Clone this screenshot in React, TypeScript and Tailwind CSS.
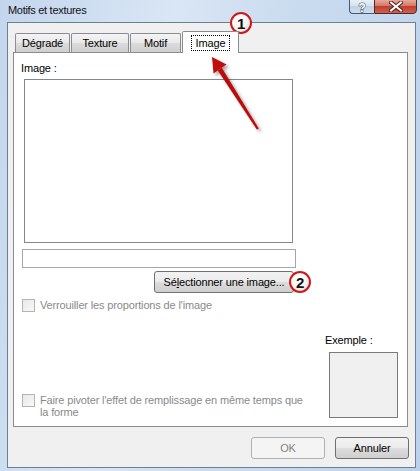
import React from "react";

function Checkbox() {
  return (
    <div className="w-[13px] h-[13px] shrink-0 border border-[#b4b4b4] bg-[linear-gradient(135deg,#e8e8e8,#f8f8f8)]" />
  );
}

function Tab({ label, w }: { label: string; w: string }) {
  return (
    <div
      className={`${w} h-[19px] mr-[1px] flex items-center justify-center border border-b-0 border-[#898c95] rounded-t-[2px] bg-[linear-gradient(#f4f4f4,#e9e9e9_50%,#dcdcdc_50%,#cfcfcf)] text-black`}
    >
      {label}
    </div>
  );
}

export default function App() {
  return (
    <div className="relative w-[420px] h-[471px] overflow-hidden bg-[linear-gradient(100deg,#c3d6ed,#d9e6f5_35%,#c9dbef_60%,#bcd2ec)] font-['Liberation_Sans',Arial,sans-serif] text-[11px] leading-[13px] tracking-[-0.15px] text-black">
      {/* title bar */}
      <div className="flex h-[22px]">
        <div className="pl-[8px] pt-[4px] text-[11px] tracking-[-0.3px] text-[#111]">Motifs et textures</div>
        <div className="ml-auto mr-[3px] flex h-[15px] -mt-px">
          <div className="w-[25px] h-full border border-[#4a5a70] border-r-0 rounded-bl-[4px] bg-[linear-gradient(#e9f0f8,#d4e0ee_50%,#c2d2e5_50%,#cfdcec)] flex items-center justify-center">
            <svg width="12" height="14" viewBox="0 0 12 14">
              <text x="6" y="12" textAnchor="middle" fontFamily="Liberation Sans, Arial, sans-serif" fontWeight="bold" fontSize="12" fill="#ffffff" stroke="#3c4a5c" strokeWidth="1" paintOrder="stroke">?</text>
            </svg>
          </div>
          <div className="w-[43px] h-full border border-[#4a2a2a] rounded-br-[4px] bg-[linear-gradient(#e8a899,#d47766_45%,#c0402f_50%,#d0604c)] flex items-center justify-center">
            <svg width="14" height="11" viewBox="0 0 14 11">
              <path d="M2 1.5 L12 9.5 M12 1.5 L2 9.5" stroke="#4a2020" strokeWidth="4" strokeLinecap="square" />
              <path d="M2 1.5 L12 9.5 M12 1.5 L2 9.5" stroke="#ffffff" strokeWidth="2" strokeLinecap="square" />
            </svg>
          </div>
        </div>
      </div>

      {/* client area */}
      <div className="ml-[7px] w-[409px] h-[446px] border border-[#6f7f92] bg-[#f0f0f0] flex flex-col">
        {/* tabs */}
        <div className="mt-[8px] ml-[7px] h-[21px] flex items-end">
          <Tab label="Dégradé" w="w-[55px]" />
          <Tab label="Texture" w="w-[58px]" />
          <Tab label="Motif" w="w-[51px]" />
          <div className="relative z-10 w-[57px] h-[22px] -mb-px border border-b-0 border-[#898c95] rounded-t-[2px] bg-white flex items-start justify-center pt-[3px]">
            <span className="border border-dotted border-black px-[4px] h-[16px] leading-[14px]">Image</span>
          </div>
        </div>

        {/* tab panel */}
        <div className="ml-[5px] w-[395px] h-[375px] border border-[#898c95] bg-white flex flex-col">
          <div className="pl-[7px] pt-[9px]">Image :</div>
          <div className="ml-[10px] mt-[4px] w-[269px] h-[164px] border border-[#828790] bg-white" />
          <div className="ml-[8px] mt-[6px] w-[274px] h-[19px] border border-[#a3a6ad] bg-white" />
          <div className="ml-[140px] mt-[3px] w-[140px] h-[22px] border border-[#707070] rounded-[3px] bg-[linear-gradient(#f2f2f2,#ebebeb_50%,#dddddd_50%,#cfcfcf)] flex items-center justify-center">
            <span>
              S&eacute;<span className="underline">l</span>ectionner une image...
            </span>
          </div>
          <div className="ml-[8px] mt-[6px] flex items-center gap-[5px] text-[#8a8a8a]">
            <Checkbox />
            <span>Verrouiller les proportions de l'image</span>
          </div>
          <div className="flex-1 flex items-end justify-between pb-[8px]">
            <div className="ml-[8px] flex items-start gap-[5px] text-[#8a8a8a]">
              <Checkbox />
              <div className="leading-[12px]">
                Faire pivoter l'effet de remplissage en même temps que
                <br />
                la forme
              </div>
            </div>
            <div className="mr-[9px] flex flex-col">
              <div>Exemple :</div>
              <div className="ml-[4px] mt-[5px] w-[69px] h-[66px] border border-[#7a7a7a] bg-[#f0f0f0]" />
            </div>
          </div>
        </div>

        {/* dialog buttons */}
        <div className="mt-[10px] pr-[6px] flex justify-end gap-[10px]">
          <div className="w-[74px] h-[22px] border border-[#adb2b5] rounded-[3px] bg-[#f4f4f4] flex items-center justify-center text-[#838383]">OK</div>
          <div className="w-[74px] h-[22px] border border-[#707070] rounded-[3px] bg-[linear-gradient(#f2f2f2,#ebebeb_50%,#dddddd_50%,#cfcfcf)] flex items-center justify-center">Annuler</div>
        </div>
      </div>

      {/* annotations */}
      <svg className="absolute left-0 top-0 pointer-events-none" width="420" height="471" viewBox="0 0 420 471">
        <defs>
          <filter id="sh" x="-50%" y="-50%" width="200%" height="200%">
            <feDropShadow dx="2.5" dy="2.5" stdDeviation="1.6" floodColor="#000" floodOpacity="0.35" />
          </filter>
        </defs>
        <g filter="url(#sh)">
          <path d="M258.8 128.5 L221.8 67.8 L217.8 70.4 L256.8 129.5 Z" fill="#b80d0d" />
          <path d="M212 57 L226.5 64.5 L213.5 73.5 Z" fill="#c01010" />
        </g>
      </svg>

      <div className="absolute left-[230px] top-[12px] w-[22px] h-[22px] rounded-full border-2 border-[#d01818] bg-[radial-gradient(circle_at_35%_30%,#ffffff,#f4f4f4_55%,#cfcfcf)] flex items-center justify-center font-bold text-[15px] leading-none text-[#111]">
        1
      </div>
      <div className="absolute left-[289px] top-[271px] w-[22px] h-[22px] rounded-full border-2 border-[#d01818] bg-[radial-gradient(circle_at_35%_30%,#ffffff,#f4f4f4_55%,#cfcfcf)] flex items-center justify-center font-bold text-[15px] leading-none text-[#111]">
        2
      </div>
    </div>
  );
}
